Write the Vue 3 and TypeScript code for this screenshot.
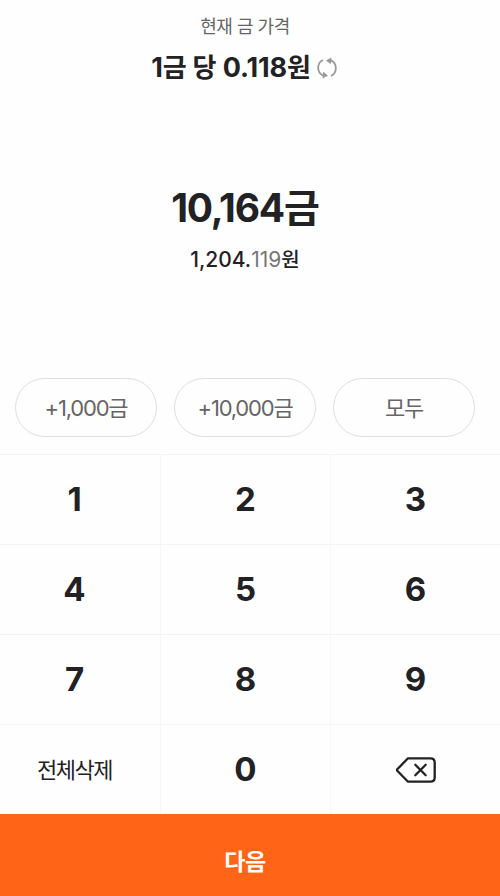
<script setup lang="ts">
import { ref } from 'vue'

const chips = ref<{ amount: string; unit: string }[]>([
  { amount: '+1,000', unit: '금' },
  { amount: '+10,000', unit: '금' },
  { amount: '', unit: '모두' },
])
const digits: string[] = ['1', '2', '3', '4', '5', '6', '7', '8', '9']
</script>

<template>
  <main class="screen">
    <header class="rate">
      <p class="rate-label">현재 금 가격</p>
      <div class="rate-row">
        <strong class="rate-value">1<span class="ko">금 당</span> 0.118<span class="ko">원</span></strong>
        <svg class="refresh" viewBox="0 0 20 22" fill="none" stroke="#9a9a9a" stroke-width="1.8">
          <path d="M6 3A9 8.8 0 0 0 6 18.6M14 19A9 8.8 0 0 0 14 3.4" />
          <path d="M9 3.6 14.4 .4 13.8 7.2ZM11 18.4 5.6 21.6 6.2 14.8Z" fill="#9a9a9a" stroke="none" />
        </svg>
      </div>
    </header>

    <section class="amount">
      <h1 class="gold">10,164<span class="ko">금</span></h1>
      <p class="won">1,204.<span class="fraction">119</span><span class="ko">원</span></p>
    </section>

    <div class="chips">
      <button v-for="chip in chips" :key="chip.amount" class="chip" type="button">
        <span>{{ chip.amount }}<span class="ko">{{ chip.unit }}</span></span>
      </button>
    </div>

    <div class="keypad">
      <button v-for="digit in digits" :key="digit" class="key" type="button">{{ digit }}</button>
      <button class="key clear" type="button">전체삭제</button>
      <button class="key" type="button">0</button>
      <button class="key erase" type="button" aria-label="지우기">
        <svg class="backspace" viewBox="0 0 40 26" fill="none" stroke="#222225" stroke-width="2.3" stroke-linecap="round" stroke-linejoin="round">
          <path d="M12 1.3H34.5Q38.7 1.3 38.7 5.5V20.5Q38.7 24.7 34.5 24.7H12L1.3 13.8Q.6 13 1.3 12.2Z" />
          <path d="M19.3 7.8 29.7 18.2M29.7 7.8 19.3 18.2" />
        </svg>
      </button>
    </div>

    <button class="next" type="button">다음</button>
  </main>
</template>

<style>
body {
  overflow: hidden;
  background: #fefefe;
}
</style>

<style scoped>
.screen {
  display: flex;
  flex-direction: column;
  width: 512px;
  height: 896px;
  margin-left: -11px;
  color: #222225;
  font-family: Inter, "Noto Sans CJK KR", sans-serif;
}
p, h1 {
  margin: 0;
}
button {
  padding: 0;
  border: 0;
  background: none;
  color: inherit;
  font-family: inherit;
}
.rate {
  display: flex;
  flex-direction: column;
  align-items: center;
  height: 170px;
  padding-top: 13px;
  box-sizing: border-box;
}
.rate-label {
  height: 28px;
  color: #666;
  font-size: 18px;
  line-height: 28px;
  letter-spacing: -0.5px;
}
.rate-row {
  display: flex;
  align-items: center;
  gap: 6px;
  height: 40px;
  margin-top: 7px;
  padding-right: 2px;
}
.rate-value {
  font-size: 27px;
  font-weight: 700;
  line-height: 40px;
  letter-spacing: -0.1px;
  white-space: nowrap;
}
.rate-value .ko {
  font-size: 26px;
}
.refresh {
  width: 20px;
  height: 22px;
}
.amount {
  display: flex;
  flex-direction: column;
  align-items: center;
  height: 208px;
  padding-top: 13px;
  box-sizing: border-box;
}
.gold {
  height: 50px;
  font-size: 39px;
  font-weight: 700;
  line-height: 50px;
  letter-spacing: -1.2px;
  white-space: nowrap;
}
.won {
  height: 30px;
  margin-top: 12px;
  font-size: 21px;
  line-height: 30px;
  font-weight: 500;
}
.won .ko {
  font-size: 20px;
}
.fraction {
  color: #777;
  font-weight: 400;
}
.chips {
  display: flex;
  justify-content: center;
  gap: 17px;
  height: 76px;
}
.chip {
  width: 142px;
  height: 59px;
  border: 1px solid #dedede;
  border-radius: 30px;
  color: #666;
  font-size: 22px;
  line-height: 30px;
  letter-spacing: -1.2px;
}
.keypad {
  display: grid;
  grid-template-columns: 172px 170px 170px;
  grid-auto-rows: 90px;
}
.key {
  display: flex;
  align-items: center;
  justify-content: center;
  padding-bottom: 1px;
  border-top: 1px solid #f3f3f3;
  border-right: 1px solid #f7f7f7;
  font-size: 33px;
  font-weight: 700;
}
.clear {
  padding-bottom: 4px;
  font-size: 22px;
  font-weight: 400;
  letter-spacing: -1.5px;
}
.erase {
  padding-bottom: 0;
}
.backspace {
  width: 40px;
  height: 26px;
}
.next {
  height: 82px;
  padding-top: 9px;
  background: #ff6417;
  color: #fff;
  font-size: 23px;
  font-weight: 700;
  letter-spacing: -0.5px;
}
</style>
